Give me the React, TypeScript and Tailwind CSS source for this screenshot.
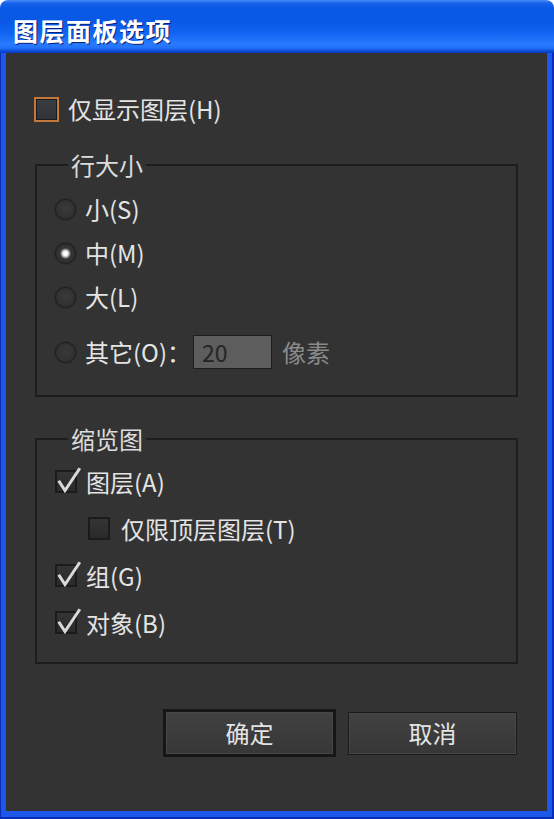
import React from "react";

function Check({ checked, focus }: { checked?: boolean; focus?: boolean }) {
  if (focus) {
    return (
      <span className="w-[25px] h-[25px] shrink-0 border-2 border-[#c4783a] flex">
        <span className="flex-1 border border-[#1a1a1a] bg-[linear-gradient(180deg,#3a3e42,#30343a)]" />
      </span>
    );
  }
  return (
    <span className="relative w-[22px] h-[23px] shrink-0 border-2 border-[#1b1b1b] bg-[linear-gradient(180deg,#343434,#2a2a2a)]">
      {checked && (
        <svg
          className="absolute left-[-2px] top-[-6px]"
          width="27"
          height="29"
          viewBox="0 0 27 29"
        >
          <path
            d="M4.5 16 L10 24.5 L24 3.5"
            fill="none"
            stroke="#dadada"
            strokeWidth="3"
            strokeLinecap="square"
            strokeLinejoin="miter"
          />
        </svg>
      )}
    </span>
  );
}

function Radio({ checked }: { checked?: boolean }) {
  return (
    <span className="w-[21px] h-[21px] shrink-0 rounded-full border border-[#1c1c1c] bg-[radial-gradient(circle_at_50%_45%,#3a3a3a,#2c2c2c)] shadow-[0_0_0_1px_#2d2d2d] flex items-center justify-center">
      {checked && (
        <span className="w-[11px] h-[11px] rounded-full bg-[radial-gradient(circle,#ffffff_0px,#ffffff_2px,#d0d0d0_3px,#7a7a7a_4.5px,#3a3a3a_5.5px)]" />
      )}
    </span>
  );
}

export default function App() {
  const label = "text-[24px] leading-[28px] text-[#e4e4e4]";
  return (
    <div className="w-[554px] h-[819px] bg-white font-['Noto_Sans_CJK_SC',sans-serif]">
      <div className="flex flex-col h-full rounded-t-[8px] overflow-hidden">
        {/* Title bar */}
        <div className="h-[53px] shrink-0 flex items-center pl-[13px] pt-[8px] bg-[linear-gradient(180deg,#4a8cf6_0px,#1a64ea_3px,#0a58e6_8px,#0a58e6_22px,#1266f2_34px,#2a7aff_44px,#2272fa_48px,#0b4cd6_51px,#0838c0_53px)]">
          <span className="text-white text-[25px] font-bold tracking-[1.5px] leading-none [text-shadow:1px_1px_0_#0a1f78]">
            图层面板选项
          </span>
        </div>
        {/* Frame */}
        <div className="flex-1 flex flex-col bg-[#1b57ea] border-l border-r-2 border-b-2 border-[#0a2cb4] pl-[5px] pr-[5px] pb-[6px]">
          <div className="flex-1 bg-[#333333] flex flex-col px-[29px] pt-[42px]">
            {/* show layers only */}
            <div className="h-[28px] flex items-center gap-[9px] ml-[-1px]">
              <Check focus />
              <span className={label}>仅显示图层(H)</span>
            </div>

            {/* Row size */}
            <fieldset className="mt-[28px] border-2 border-[#1d1d1d] pl-[18px] pt-[8px] pb-[21px]">
              <legend className="ml-[13px] px-[3px] text-[24px] leading-[28px] text-[#dcdcdc]">
                行大小
              </legend>
              <div className="h-[44px] flex items-center gap-[9px]">
                <Radio />
                <span className={label}>小(S)</span>
              </div>
              <div className="h-[44px] flex items-center gap-[9px]">
                <Radio checked />
                <span className={label}>中(M)</span>
              </div>
              <div className="h-[44px] flex items-center gap-[9px]">
                <Radio />
                <span className={label}>大(L)</span>
              </div>
              <div className="mt-[11px] h-[44px] flex items-center">
                <Radio />
                <span className={label + " ml-[9px] w-[108px]"}>其它(O)：</span>
                <div className="w-[79px] h-[34px] bg-[#5d5d5d] border border-[#1e1e1e] flex items-center pl-[8px] text-[23px] leading-none text-[#242424]">
                  20
                </div>
                <span className="ml-[10px] text-[24px] leading-[28px] text-[#8a8a8a]">像素</span>
              </div>
            </fieldset>

            {/* Thumbnails */}
            <fieldset className="mt-[28px] border-2 border-[#1d1d1d] pl-[18px] pt-[5px] pb-[16px]">
              <legend className="ml-[13px] px-[3px] text-[24px] leading-[28px] text-[#dcdcdc]">
                缩览图
              </legend>
              <div className="h-[47px] flex items-center gap-[9px]">
                <Check checked />
                <span className={label}>图层(A)</span>
              </div>
              <div className="h-[47px] flex items-center gap-[11px] pl-[33px]">
                <Check />
                <span className={label}>仅限顶层图层(T)</span>
              </div>
              <div className="h-[47px] flex items-center gap-[9px]">
                <Check checked />
                <span className={label}>组(G)</span>
              </div>
              <div className="h-[47px] flex items-center gap-[9px]">
                <Check checked />
                <span className={label}>对象(B)</span>
              </div>
            </fieldset>

            {/* Buttons */}
            <div className="mt-[45px] flex items-center justify-end gap-[12px] pr-[1px]">
              <button className="w-[173px] h-[48px] border-[3px] border-[#161616] flex">
                <span className="flex-1 flex items-center justify-center border border-[#474747] bg-[linear-gradient(180deg,#414141,#373737)] text-[24px] leading-none text-[#e4e4e4]">
                  确定
                </span>
              </button>
              <button className="w-[169px] h-[43px] border border-[#1a1a1a] flex">
                <span className="flex-1 flex items-center justify-center border border-[#464646] bg-[linear-gradient(180deg,#414141,#373737)] text-[24px] leading-none text-[#e4e4e4]">
                  取消
                </span>
              </button>
            </div>
          </div>
        </div>
      </div>
    </div>
  );
}
